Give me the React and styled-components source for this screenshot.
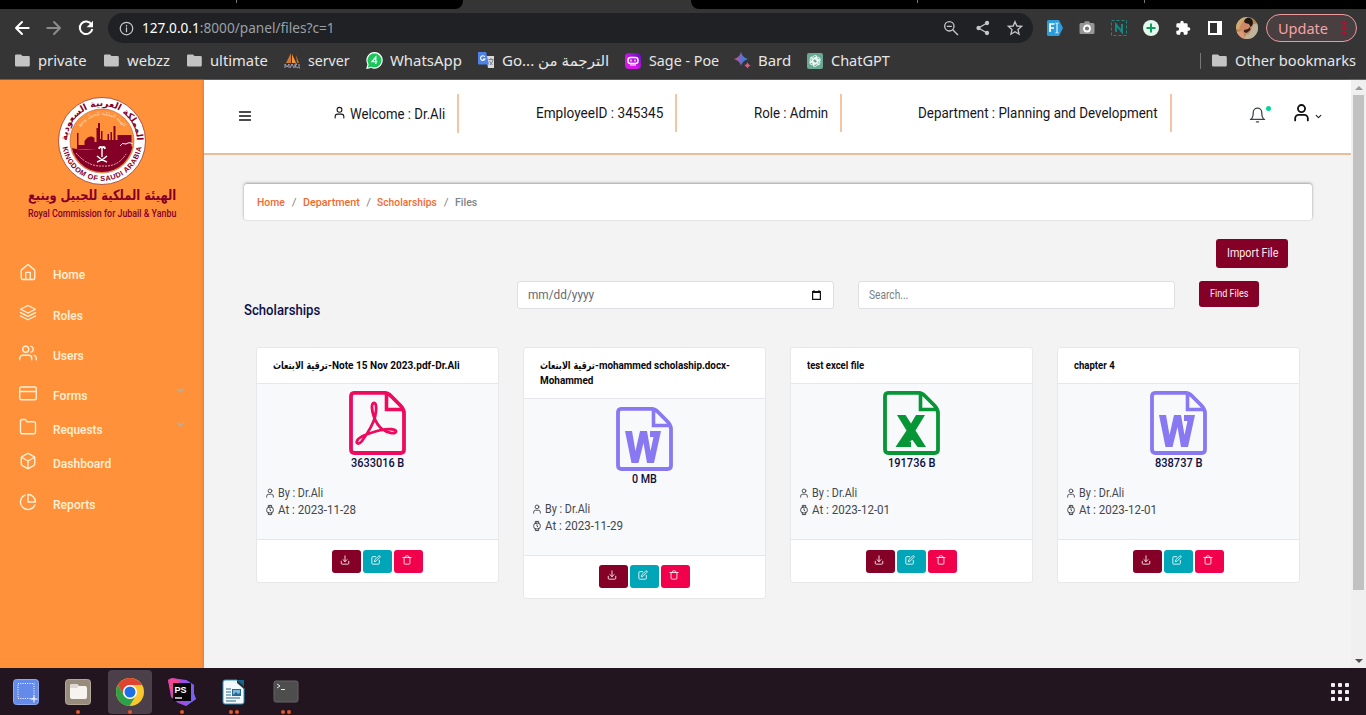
import React, { useLayoutEffect, useRef, useState } from "react";
import styled, { createGlobalStyle } from "styled-components";

const Global = createGlobalStyle`
  * { box-sizing: border-box; }
  html, body { margin: 0; padding: 0; overflow: hidden; }
  body { font-family: Roboto, "Noto Sans", "DejaVu Sans", sans-serif; }
`;

/* ---------- text that keeps a fixed measure ---------- */
const FitBox = styled.span`
  display: inline-block;
  width: ${(p) => p.$w}px;
  flex: none;
  white-space: nowrap;
  line-height: inherit;
`;
const FitInner = styled.span`
  display: inline-block;
  transform-origin: 0 50%;
  white-space: pre;
`;
function Fit({ w, children }) {
  const ref = useRef(null);
  const [scale, setScale] = useState(1);
  useLayoutEffect(() => {
    const natural = ref.current.offsetWidth;
    if (natural) setScale(w / natural);
  }, [w, children]);
  return (
    <FitBox $w={w}>
      <FitInner ref={ref} style={{ transform: `scaleX(${scale})` }}>{children}</FitInner>
    </FitBox>
  );
}

/* ---------- icons ---------- */
const Svg = styled.svg`
  display: block;
  flex: none;
  overflow: visible;
`;
const paths = {
  home: <><path d="M3 9.500 12 2l9 7.500V20a2 2 0 0 1-2 2H5a2 2 0 0 1-2-2Z" /><path d="M9 22V12.500h6V22" /></>,
  layers: <><path d="M12 2 2 7l10 5 10-5Z" /><path d="m2 11.500 10 5 10-5M2 16l10 5 10-5" /></>,
  users: <><path d="M17 21v-2a4 4 0 0 0-4-4H5a4 4 0 0 0-4 4v2" /><circle cx="9" cy="7" r="4" /><path d="M23 21v-2a4 4 0 0 0-3-3.87M16 3.13a4 4 0 0 1 0 7.75" /></>,
  card: <><rect x="1" y="4" width="22" height="17" rx="2" /><path d="M1 10h22" /></>,
  folder: <path d="M22 19a2 2 0 0 1-2 2H4a2 2 0 0 1-2-2V4a2 2 0 0 1 2-2h4.500l2 3H20a2 2 0 0 1 2 2Z" />,
  box: <><path d="M21 16V8a2 2 0 0 0-1-1.730l-7-4a2 2 0 0 0-2 0l-7 4A2 2 0 0 0 3 8v8a2 2 0 0 0 1 1.730l7 4a2 2 0 0 0 2 0l7-4A2 2 0 0 0 21 16Z" /><path d="M3.270 6.960 12 12.010l8.730-5.050M12 22.080V12" /></>,
  pie: <><path d="M21.210 15.890A10 10 0 1 1 8 2.830" /><path d="M22 12A10 10 0 0 0 12 2v10Z" /></>,
  user: <><path d="M20 22v-2.500a4.500 4.500 0 0 0-4.500-4.500h-7A4.500 4.500 0 0 0 4 19.500V22" /><circle cx="12" cy="7" r="4.500" /></>,
  watch: <><rect x="4" y="5" width="16" height="14" rx="6" /><path d="M12 9v3.500l2 1.500M8 5V1h8v4M8 19v4h8v-4" /></>,
  bell: <><path d="M18 9A6 6 0 0 0 6 9c0 8-4 10-4 10h20s-4-2-4-10" /><path d="M10.500 22.500h3" /></>,
  chevron: <path d="m4 8 8 8 8-8" />,
  download: <><path d="M21 15v5a2 2 0 0 1-2 2H5a2 2 0 0 1-2-2v-5M7 11l5 5 5-5M12 16V2" /></>,
  edit: <><path d="M11 4H4a2 2 0 0 0-2 2v14a2 2 0 0 0 2 2h14a2 2 0 0 0 2-2v-7" /><path d="M18.500 2.500a2.120 2.120 0 0 1 3 3L12 15l-4 1 1-4Z" /></>,
  trash: <path d="M2 6h20M19 6v14a2 2 0 0 1-2 2H7a2 2 0 0 1-2-2V6M8 6V4a2 2 0 0 1 2-2h4a2 2 0 0 1 2 2v2" />,
  menu: <path d="M1 4h22M1 12h22M1 20h22" />,
  back: <path d="M22 12H3M12 3l-9 9 9 9" />,
  forward: <path d="M2 12h19M12 3l9 9-9 9" />,
  info: <><circle cx="12" cy="12" r="10" /><path d="M12 11v6M12 7v1" /></>,
  zoomout: <><circle cx="9.500" cy="9.500" r="7" /><path d="m15 15 7 7M6.500 9.500h6" /></>,
};
const Icon = ({ name, size = 18, color = "currentColor", sw = 1.6 }) => (
  <Svg width={size} height={size} viewBox="0 0 24 24" fill="none" stroke={color} strokeWidth={sw} strokeLinecap="round" strokeLinejoin="round">
    {paths[name]}
  </Svg>
);

/* ---------- browser chrome ---------- */
const Screen = styled.div`
  width: 1366px;
  height: 715px;
  display: flex;
  flex-direction: column;
  overflow: hidden;
`;
const TabStrip = styled.div`
  height: 9px;
  flex: none;
  background: #353535;
  display: flex;
  justify-content: space-between;
`;
const TabGroup = styled.div`
  width: ${(p) => p.$w}px;
  background: #000;
  border-radius: ${(p) => (p.$right ? "0 0 0 8px" : "0 0 8px 0")};
  padding-left: ${(p) => p.$pad}px;
  display: flex;
  gap: 226px;
`;
const TabDivider = styled.i`
  width: 1px;
  height: 3px;
  background: #777;
`;
const Toolbar = styled.div`
  height: 38px;
  flex: none;
  background: #353535;
  display: flex;
  align-items: center;
  padding: 0 9px 0 14px;
  color: #fff;
`;
const NavIcons = styled.div`
  display: flex;
  gap: 16px;
  width: 94px;
`;
const Omnibox = styled.div`
  width: 925px;
  height: 30px;
  border-radius: 15px;
  background: #202124;
  display: flex;
  align-items: center;
  padding: 0 10px 0 11px;
  color: #c4c7ca;
  font: 14px/20px "Noto Sans", sans-serif;
`;
const Address = styled.div`
  margin-left: 8px;
  flex: 1;
  color: #9aa0a6;
  b { color: #fff; font-weight: 400; }
`;
const OmniActions = styled.div`
  display: flex;
  gap: 16px;
`;
const Extensions = styled.div`
  display: flex;
  align-items: center;
  gap: 16px;
  margin-left: 14px;
`;
const Update = styled.div`
  width: 91px;
  height: 28px;
  margin-left: 8px;
  border: 1px solid #ef9a9f;
  border-radius: 14px;
  background: #493f40;
  color: #f4a3a7;
  display: flex;
  align-items: center;
  justify-content: space-between;
  padding: 0 10px 1px 11px;
  font: 14.500px/20px "Noto Sans", sans-serif;
`;
const Bookmarks = styled.div`
  height: 33px;
  flex: none;
  background: #353535;
  border-bottom: 1px solid #656565;
  display: flex;
  align-items: center;
  padding: 0 10px 5px 15px;
  color: #e6e6e6;
  font: 14.500px/20px "Noto Sans", "DejaVu Sans", sans-serif;
`;
const Bookmark = styled.div`
  display: flex;
  align-items: center;
  gap: ${(p) => p.$gap ?? 8}px;
  margin-right: ${(p) => p.$mr ?? 15}px;
`;
const BookmarkLabel = styled.div`padding-bottom: 2px;`;
const Spacer = styled.div`flex: 1;`;
const BookmarkRule = styled.i`
  width: 1px;
  height: 16px;
  background: #777;
  margin-right: 11px;
`;

const Reload = () => (
  <Svg width="16" height="16" viewBox="0 0 16 16" fill="none" stroke="#fff" strokeWidth="2">
    <path d="M13.500 4.500A6.300 6.300 0 1 0 14.300 9" /><path d="M15 .8v6.400H8.700Z" fill="#fff" stroke="none" />
  </Svg>
);
const Folder = () => (
  <Svg width="15" height="13" viewBox="0 0 15 13"><path d="M1.500.5H6L7.500 2H13.500A1.300 1.300 0 0 1 14.800 3.300V11.200A1.300 1.300 0 0 1 13.500 12.500H1.300A1.300 1.300 0 0 1 0 11.200V1.800A1.300 1.300 0 0 1 1.500.5Z" fill="#c3c3c3" /></Svg>
);
const Share = () => (
  <Svg width="16" height="16" viewBox="0 0 16 16" fill="#c4c7ca" stroke="#c4c7ca" strokeWidth="1.300"><path d="M12 3 3.500 8l8.500 5" fill="none" /><circle cx="12" cy="3" r="1.500" /><circle cx="3.500" cy="8" r="1.500" /><circle cx="12" cy="13" r="1.500" /></Svg>
);
const Star = () => (
  <Svg width="16" height="16" viewBox="0 0 24 24" fill="none" stroke="#c4c7ca" strokeWidth="2"><path d="m12 2.500 2.800 6.500 7.100.6-5.400 4.700 1.600 7L12 17.600l-6.100 3.700 1.600-7-5.400-4.700 7.100-.6Z" /></Svg>
);
const FontExt = () => (
  <Svg width="16" height="16" viewBox="0 0 16 16"><path d="M1.500 0H12l4 8-4 8H1.500A1.500 1.500 0 0 1 0 14.500v-13A1.500 1.500 0 0 1 1.500 0Z" fill="#2d9cdb" /><path d="M3 12V4h4.500M3 8h4" stroke="#fff" strokeWidth="1.700" fill="none" /><path d="M8.500 3c1 0 1.500.3 1.500 1v8c0 .7-.5 1-1.500 1M11.500 3c-1 0-1.500.3-1.500 1M11.500 13c-1 0-1.500-.3-1.500-1" stroke="#fff" fill="none" /></Svg>
);
const Camera = () => (
  <Svg width="16" height="14" viewBox="0 0 16 14"><path d="M2 2h3l1-1.700h4L11 2h3a1.500 1.500 0 0 1 1.500 1.500v8A1.500 1.500 0 0 1 14 13H2A1.500 1.500 0 0 1 .5 11.500v-8A1.500 1.500 0 0 1 2 2Z" fill="#969696" /><circle cx="8" cy="7.500" r="3" fill="#777" stroke="#fff" strokeWidth="1.800" /></Svg>
);
const NExt = () => (
  <Svg width="16" height="16" viewBox="0 0 16 16" fill="none" stroke="#168b85"><rect x=".5" y=".5" width="15" height="15" strokeDasharray="3 2" /><path d="M5 12V4.500L11 12V4" strokeWidth="1.900" /></Svg>
);
const PlusExt = () => (
  <Svg width="16" height="16" viewBox="0 0 16 16"><circle cx="8" cy="8" r="8" fill="#e5f8ed" /><path d="M8 3.500v9M3.500 8h9" stroke="#0c9f5f" strokeWidth="2" /></Svg>
);
const Puzzle = () => (
  <Svg width="16" height="16" viewBox="0 0 24 24"><path d="M20.500 11H19V7a2 2 0 0 0-2-2h-4V3.500a2.500 2.500 0 0 0-5 0V5H4a2 2 0 0 0-2 2v3.800h1.500a2.700 2.700 0 0 1 0 5.400H2V20a2 2 0 0 0 2 2h3.800v-1.500a2.700 2.700 0 0 1 5.400 0V22H17a2 2 0 0 0 2-2v-4h1.500a2.500 2.500 0 0 0 0-5Z" fill="#fff" /></Svg>
);
const Panel = () => (
  <Svg width="14" height="14" viewBox="0 0 14 14"><path d="M0 0h14v14H0Z" fill="#fff" /><path d="M2 2h7v10H2Z" fill="#303030" /></Svg>
);
const PanelWrap = styled.span`margin-left: 1px;`;
const Avatar = () => (
  <Svg width="22" height="22" viewBox="0 0 22 22"><defs><clipPath id="avatar"><circle cx="11" cy="11" r="11" /></clipPath></defs><g clipPath="url(#avatar)"><path d="M0 0h22v22H0Z" fill="#b18850" /><path d="M0 0h11L6 13 0 12Z" fill="#cfab6d" /><path d="m15 8 7-2v16H8Z" fill="#beb49b" /><path d="M5 7q3-6 9-4l3 6-4 8-7 1-3-6Z" fill="#cf8867" /><path d="M8 4q2-4 6-3 4 2 2.500 7l-2 2-1.500-3-4-1Z" fill="#1d1715" /><path d="m8 13 4-1 2-2 .5 3-4 3-2.500-1Z" fill="#3c211b" /><path d="m0 15 6-1 4 8H0Z" fill="#dc9c79" /></g></Svg>
);
const Dots3 = () => (
  <Svg width="4" height="14" viewBox="0 0 4 14" fill="#d6002f"><circle cx="2" cy="2" r="1.700" /><circle cx="2" cy="7" r="1.700" /><circle cx="2" cy="12" r="1.700" /></Svg>
);
const Server = () => (
  <Svg width="17" height="16" viewBox="0 0 17 16"><path d="M7 0v10H2Z" fill="#d0782e" /><path d="m8 1 4 9H8Z" fill="#f39a3d" /><path d="m12 2 3 8h-2Z" fill="#d96b21" /><path d="M1 15v-4l2 3 2-3v4M6 15l2-4 2 4M11 15v-4h2l-2 2 3 2M15 11v4h1" stroke="#a9a0b8" fill="none" /></Svg>
);
const WhatsApp = () => (
  <Svg width="17" height="17" viewBox="0 0 17 17"><path d="M8.500.7a7.700 7.700 0 1 1-3.500 14.600l-4 1 1-4A7.700 7.700 0 0 1 8.500.7Z" fill="#19c75a" stroke="#fff" strokeWidth="1.200" /><path d="M9.800 12V5L6 9.700h5.300" fill="none" stroke="#fff" strokeWidth="1.300" /></Svg>
);
const Translate = () => (
  <Svg width="17" height="17" viewBox="0 0 17 17"><path d="M8 4h8v12H10Z" fill="#dadada" /><path d="M0 0h8l3 12.500H1Q0 12.500 0 11.500Z" fill="#4d83e8" /><path d="M6.800 4.800A2.300 2.300 0 1 0 7 7H5" stroke="#fff" fill="none" strokeWidth="1.100" /><path d="M10.500 7.500h5M13 6v1.500M15 8q-1 3-3 5M11.500 9q1 2 3 4" stroke="#667" fill="none" strokeWidth=".8" /></Svg>
);
const Poe = () => (
  <Svg width="16" height="16" viewBox="0 0 16 16"><defs><linearGradient id="poe" x1="0" y1="1" x2="1" y2="0"><stop offset=".4" stopColor="#d715e8" /><stop offset="1" stopColor="#5212b8" /></linearGradient></defs><rect width="16" height="16" rx="4" fill="url(#poe)" /><rect x="3" y="4.500" width="10" height="6" rx="2.500" fill="none" stroke="#fff" strokeWidth="1.400" /><path d="M6 6.500v2M10 6.500v2M5 12h6" stroke="#fff" strokeWidth="1.200" /></Svg>
);
const Bard = () => (
  <Svg width="17" height="17" viewBox="0 0 17 17"><defs><linearGradient id="bard"><stop stopColor="#e55575" /><stop offset=".45" stopColor="#7668c7" /><stop offset="1" stopColor="#188fee" /></linearGradient></defs><path d="M7 0q1.500 5.500 7 7-5.500 1.500-7 7-1.500-5.500-7-7 5.500-1.500 7-7Z" fill="url(#bard)" /><path d="M13.500 10.500q.8 2.200 3 3-2.200.8-3 3-.8-2.200-3-3 2.200-.8 3-3Z" fill="#d65f87" /></Svg>
);
const ChatGPT = () => (
  <Svg width="16" height="16" viewBox="0 0 16 16"><rect width="16" height="16" rx="2" fill="#68a894" /><g fill="none" stroke="#f3fffa" strokeWidth=".9">{[0, 60, 120, 180, 240, 300].map((a) => <path key={a} transform={`rotate(${a} 8 8)`} d="M5.700 9.300V5a2.500 2.500 0 0 1 4.300-1.700L6.800 5.200v2" />)}</g></Svg>
);

const bookmarks = [
  [<Folder />, "private", 49, 8, 17],
  [<Folder />, "webzz", 43, 8, 17],
  [<Folder />, "ultimate", 58, 8, 16],
  [<Server />, "server", 42, 7, 16],
  [<WhatsApp />, "WhatsApp", 72, 7, 16],
  [<Translate />, "Go... الترجمة من", 107, 7, 16],
  [<Poe />, "Sage - Poe", 70, 8, 15],
  [<Bard />, "Bard", 33, 7, 16],
  [<ChatGPT />, "ChatGPT", 59, 8, 0],
];

function Browser() {
  return (
    <>
      <TabStrip>
        <TabGroup $w={463} $pad={236}><TabDivider /></TabGroup>
        <TabGroup $right $w={675} $pad={226}><TabDivider /><TabDivider /></TabGroup>
      </TabStrip>
      <Toolbar>
        <NavIcons><Icon name="back" size={16} sw={3} /><Icon name="forward" size={16} sw={3} color="#8c8c8c" /><Reload /></NavIcons>
        <Omnibox>
          <Icon name="info" size={15} sw={2} />
          <Address><Fit w={193}><b>127.0.0.1</b>:8000/panel/files?c=1</Fit></Address>
          <OmniActions><Icon name="zoomout" size={16} sw={2} /><Share /><Star /></OmniActions>
        </Omnibox>
        <Extensions><FontExt /><Camera /><NExt /><PlusExt /><Puzzle /><PanelWrap><Panel /></PanelWrap></Extensions>
        <Spacer />
        <Avatar />
        <Update><Fit w={50}>Update</Fit><Dots3 /></Update>
      </Toolbar>
      <Bookmarks>
        {bookmarks.map(([icon, label, w, gap, mr]) => (
          <Bookmark key={label} $gap={gap} $mr={mr}>{icon}<BookmarkLabel><Fit w={w}>{label}</Fit></BookmarkLabel></Bookmark>
        ))}
        <Spacer />
        <BookmarkRule />
        <Bookmark $gap={8} $mr={0}><Folder /><BookmarkLabel><Fit w={121}>Other bookmarks</Fit></BookmarkLabel></Bookmark>
      </Bookmarks>
    </>
  );
}

/* ---------- sidebar ---------- */
const Page = styled.div`
  height: 588px;
  flex: none;
  display: flex;
  background: #f3f3f3;
`;
const Sidebar = styled.aside`
  width: 204px;
  flex: none;
  background: #ff913b;
  color: #fff1d8;
`;
const Brand = styled.div`
  height: 173px;
  padding-top: 17px;
  display: flex;
  flex-direction: column;
  align-items: center;
  color: #850027;
`;
const BrandArabic = styled.div`
  font: 700 14px/20px "DejaVu Sans", sans-serif;
`;
const BrandEnglish = styled.div`
  font: 500 11px/16px Roboto, sans-serif;
  margin-top: 1px;
`;
const NavItem = styled.div`
  height: ${(p) => p.$h}px;
  padding: 0 20px 0 19px;
  display: flex;
  align-items: flex-start;
  font: 500 13.500px/20px Roboto, sans-serif;
`;
const NavLabel = styled.div`
  margin: 0 0 0 16px;
  padding-top: 0.5px;
  flex: 1;
`;
const NavChevron = styled.span`
  color: #bcae96;
  margin-top: 3px;
`;

const Seal = () => (
  <Svg width="88" height="88" viewBox="0 0 88 88">
    <defs>
      <path id="sealTop" d="M9.500 50a35 35 0 1 1 69 0" />
      <path id="sealBottom" d="M4 44a40 40 0 0 0 80 0" />
      <path id="sealInner" d="M18 44a26 26 0 0 1 52 0" />
      <clipPath id="sealDisc"><circle cx="44" cy="44" r="31" /></clipPath>
    </defs>
    <circle cx="44" cy="44" r="43.500" fill="#fff" stroke="#9b3a31" strokeWidth=".8" />
    <circle cx="44" cy="44" r="32" fill="#ff913b" stroke="#b55d35" strokeWidth=".6" />
    <g clipPath="url(#sealDisc)" fill="#850027">
      <path d="M13 52h6V36h1.500v12h6v-4q5-7 10-3v4h2V31h1.500v-5h2v16h1V34h1.500v9h5v-6h1.500v6h1.500v-8h1.500v8h1.500V29h2v14h2v-5h14v15H44Z" />
      <path d="M13 51q18 4 30 0 12-5 33-1v26H12Z" />
      <path d="M62 49q2-4 6-2 4-3 8 1" fill="none" stroke="#fff" />
    </g>
    <path d="M18 56q12 14 27 13 15 1 23-12" fill="none" stroke="#e9b9b0" strokeWidth="1" strokeDasharray="2 1" />
    <path d="M44 60v-9m-3 1q1-3 3-1 2-2 3 1M40.500 51.500q2-3 3.500-1 2-2 3.500 1M39 65q6-2 10-6M49 65q-6-2-10-6" fill="none" stroke="#fff" strokeWidth="1.400" />
    <text fill="#850027" fontFamily="DejaVu Sans, sans-serif" fontSize="9" fontWeight="700"><textPath href="#sealTop" startOffset="50%" textAnchor="middle">المملكة العربية السعودية</textPath></text>
    <text fill="#ffdfb9" fontFamily="DejaVu Sans, sans-serif" fontSize="4.800"><textPath href="#sealInner" startOffset="50%" textAnchor="middle">الهيئة الملكية للجبيل وينبع</textPath></text>
    <text fill="#850027" fontFamily="Liberation Sans, sans-serif" fontSize="7.300" fontWeight="700"><textPath href="#sealBottom" startOffset="50%" textAnchor="middle" textLength="113">KINGDOM OF SAUDI ARABIA</textPath></text>
  </Svg>
);

const nav = [
  ["home", "Home", 32, 41],
  ["layers", "Roles", 30, 40],
  ["users", "Users", 31, 40],
  ["card", "Forms", 34, 34, true],
  ["folder", "Requests", 50, 34, true],
  ["box", "Dashboard", 58, 41],
  ["pie", "Reports", 43, 40],
];
const NavList = styled.nav`padding-top: 10px;`;

/* ---------- main column ---------- */
const Main = styled.main`
  width: 1147px;
  flex: none;
  box-shadow: -1px 0 3px #0002;
`;
const Header = styled.header`
  height: 75px;
  background: #fff;
  border-bottom: 2px solid #e9bd9b;
  display: flex;
  align-items: flex-start;
  padding: 14px 29px 0 35px;
  font: 14px/20px Roboto, sans-serif;
  color: #16161c;
`;
const MenuButton = styled.div`padding-top: 16px; width: 94px;`;
const HeaderInfo = styled.div`
  height: ${(p) => p.$h ?? 38}px;
  width: ${(p) => p.$w}px;
  border-right: 2px solid #f4c5a3;
  padding: ${(p) => p.$pt ?? 9}px 12px 0 0;
  display: flex;
  justify-content: flex-end;
  gap: 4px;
`;
const HeaderUser = styled.span`margin-top: 2px;`;
const HeaderActions = styled.div`
  display: flex;
  margin-left: auto;
  padding-top: 9px;
`;
const BellWrap = styled.div`
  position: relative;
  margin: 3px 26px 0 0;
  color: #3d434c;
`;
const BellDot = styled.i`
  position: absolute;
  top: 0;
  right: -5px;
  width: 5px;
  height: 5px;
  border-radius: 50%;
  background: #05d59b;
`;
const AccountChevron = styled.span`margin: 10px 0 0 4px;`;
const Crumbs = styled.div`
  margin: 29px 39px 0 40px;
  height: 36px;
  background: #fff;
  border-radius: 3px;
  box-shadow: 0 -1px 3px #0005, 0 0 2px #0001;
  padding: 0 13px 1px;
  display: flex;
  align-items: center;
  font: 500 11.500px/18px Roboto, sans-serif;
  color: #f16a32;
`;
const Slash = styled.span`
  width: ${(p) => p.$w ?? 17}px;
  text-align: center;
  color: #7e858b;
  font-weight: 400;
`;
const Current = styled.span`color: #7e858b;`;
const Button = styled.div`
  width: ${(p) => p.$w}px;
  height: ${(p) => p.$h}px;
  border-radius: 3px;
  background: #850027;
  color: #ffeaf0;
  display: flex;
  align-items: center;
  justify-content: center;
  padding-bottom: 1px;
  font: ${(p) => p.$fs}px/16px Roboto, sans-serif;
`;
const ImportRow = styled.div`
  display: flex;
  justify-content: flex-end;
  padding: 19px 63px 0 0;
`;
const Filters = styled.div`
  display: flex;
  padding: 13px 0 0 40px;
  height: 80px;
`;
const Title = styled.h1`
  margin: 19px 0 0;
  width: 273px;
  font: 500 14px/20px Roboto, sans-serif;
  color: #0c0f4a;
`;
const Field = styled.div`
  width: 317px;
  height: 28px;
  margin-right: 24px;
  background: #fff;
  border: 1px solid #dedfe2;
  border-radius: 3px;
  padding: 0 12px 1px 10px;
  display: flex;
  align-items: center;
  justify-content: space-between;
  color: ${(p) => p.$color};
  font: 12px/18px Roboto, sans-serif;
`;
const Calendar = () => (
  <Svg width="9" height="10" viewBox="0 0 9 10"><path d="M.6 2h7.800v7.300H.6Z" fill="none" stroke="#111" strokeWidth="1.200" /><path d="M0 1h9v2H0ZM1.500 0h1v2h-1ZM6.500 0h1v2h-1Z" fill="#111" /></Svg>
);

/* ---------- file cards ---------- */
const Cards = styled.section`
  display: flex;
  align-items: flex-start;
  gap: 24px;
  padding: 0 0 0 52px;
  margin-top: -1px;
`;
const Card = styled.article`
  width: 243px;
  flex: none;
  background: #fff;
  border: 1px solid #e7e8eb;
  border-radius: 3px;
`;
const CardTitle = styled.div`
  padding: 10px 16px;
  min-height: 35px;
  border-bottom: 1px solid #e5e7ea;
  font: 700 10.500px/15px Roboto, "DejaVu Sans", sans-serif;
  color: #08080c;
`;
const TitleLine = styled.div`
  display: flex;
  height: 15px;
`;
const ArabicRun = styled.span`
  font: 700 10.500px/15px "DejaVu Sans", sans-serif;
`;
const CardBody = styled.div`
  height: ${(p) => (p.$tall ? 156 : 155)}px;
  background: #f8f9fb;
  padding-top: ${(p) => (p.$tall ? 8 : 7)}px;
  color: #43474d;
`;
const FileMark = styled.div`
  display: flex;
  justify-content: center;
`;
const SizeLine = styled.div`
  text-align: center;
  font: 500 12px/17px Roboto, sans-serif;
  color: #0c0f3d;
  height: 30px;
`;
const MetaLine = styled.div`
  height: 17px;
  padding-left: 8px;
  display: flex;
  align-items: center;
  gap: 3px;
  font: 12px/17px Roboto, sans-serif;
`;
const MetaIcon = styled.span`padding-bottom: 2px;`;
const CardFooter = styled.div`
  height: 43px;
  border-top: 1px solid #e5e7ea;
  display: flex;
  justify-content: center;
  gap: 2px;
  padding: ${(p) => (p.$tall ? 9 : 10)}px 0 0 0;
`;
const Action = styled.div`
  width: 29px;
  height: 23px;
  border-radius: 3px;
  background: ${(p) => p.$bg};
  color: #fff;
  padding: 5px 0 0 8px;
`;

const Glyphs = {
  pdf: (
    <path d="M26 26C24 34 18 43 13 50C10 54 6 53 8.500 49C11 45 20 42 32 39C40 37.500 47 38 47 40.500C46 43.500 38 42 33 38C28 34 26.500 30 25 26C22.500 19 22 12 25 12C28 12 27.500 20 26 26Z" fill="none" stroke="#ee0a5e" strokeWidth="2.800" strokeLinejoin="round" />
  ),
  word: <path d="M9 24H16L19.500 44 24 24H31L34.500 44 37.500 30H34V24H45L38 56H31L27.500 36 22.500 56H15.500Z" fill="#8878f2" />,
  excel: <path d="M14 24h8.500L28 32.500 33 24H42L32.500 39.500 43 56h-8.500L29.500 49 26 50.500H28V56H12.500L23.500 39.500Z" fill="#069636" />,
};
const glyphColor = { pdf: "#ee0a5e", word: "#8878f2", excel: "#069636" };
const FileIcon = ({ kind }) => (
  <Svg width="57" height="64" viewBox="0 0 57 64">
    <path d="M5 1.900H36Q39 1.900 42 5L51 14Q55 18 55 22V58.500Q55 62 51.500 62H5.500Q2 62 2 58.500V5.500Q2 1.900 5 1.900Z" fill="none" stroke={glyphColor[kind]} strokeWidth="3.800" />
    <path d="M37.500 2v16.500H55" fill="none" stroke={glyphColor[kind]} strokeWidth="3.600" />
    {Glyphs[kind]}
  </Svg>
);

const files = [
  { kind: "pdf", lines: [["ترقية الابتعاث", 55, "-Note 15 Nov 2023.pdf-Dr.Ali", 132]], size: "3633016 B", sw: 53, date: "2023-11-28", dw: 78 },
  { kind: "word", lines: [["ترقية الابتعاث", 55, "-mohammed scholaship.docx-", 135], [null, 0, "Mohammed", 53]], size: "0 MB", sw: 25, date: "2023-11-29", dw: 78, tall: true },
  { kind: "excel", lines: [[null, 0, "test excel file", 57]], size: "191736 B", sw: 47, date: "2023-12-01", dw: 78 },
  { kind: "word", lines: [[null, 0, "chapter 4", 41]], size: "838737 B", sw: 47, date: "2023-12-01", dw: 78 },
];

function FileCard({ file }) {
  return (
    <Card>
      <CardTitle>
        {file.lines.map(([ar, aw, en, ew]) => (
          <TitleLine key={en}>{ar && <ArabicRun><Fit w={aw}>{ar}</Fit></ArabicRun>}<Fit w={ew}>{en}</Fit></TitleLine>
        ))}
      </CardTitle>
      <CardBody $tall={file.tall}>
        <FileMark><FileIcon kind={file.kind} /></FileMark>
        <SizeLine><Fit w={file.sw}>{file.size}</Fit></SizeLine>
        <MetaLine><MetaIcon><Icon name="user" size={10} sw={2.2} /></MetaIcon><Fit w={45}>By : Dr.Ali</Fit></MetaLine>
        <MetaLine><MetaIcon><Icon name="watch" size={10} sw={2.4} /></MetaIcon><Fit w={file.dw}>{`At : ${file.date}`}</Fit></MetaLine>
      </CardBody>
      <CardFooter $tall={file.tall}>
        <Action $bg="#850027"><Icon name="download" size={10} sw={2} /></Action>
        <Action $bg="#00a6b8"><Icon name="edit" size={10} sw={2} /></Action>
        <Action $bg="#f1004b"><Icon name="trash" size={10} sw={2} /></Action>
      </CardFooter>
    </Card>
  );
}

/* ---------- scrollbar and dock ---------- */
const Scrollbar = styled.div`
  width: 15px;
  background: #f0f0f0;
  display: flex;
  flex-direction: column;
  align-items: center;
  padding: 6px 0 5px;
`;
const Thumb = styled.div`
  width: 11px;
  height: 495px;
  margin: 5px 0 auto;
  background: #c1c1c1;
`;
const Arrow = ({ down }) => (
  <Svg width="8" height="4" viewBox="0 0 8 4"><path d={down ? "M0 0h8L4 4Z" : "M0 4h8L4 0Z"} fill={down ? "#505050" : "#9a9a9a"} /></Svg>
);
const Dock = styled.footer`
  height: 47px;
  flex: none;
  background: #22151f;
  display: flex;
  padding: 2px 17px 1px 4px;
  gap: 8px;
`;
const DockItem = styled.div`
  width: 44px;
  height: 44px;
  border-radius: 4px;
  background: ${(p) => (p.$active ? "#4b3f49" : "transparent")};
  display: flex;
  flex-direction: column;
  align-items: center;
  padding-top: 8px;
`;
const Running = styled.div`
  display: flex;
  gap: 2px;
  margin-top: 4px;
`;
const RunDot = styled.i`
  width: 4px;
  height: 4px;
  border-radius: 50%;
  background: #e2572b;
`;
const AppGrid = styled.div`
  margin: 13px 0 0 auto;
  display: grid;
  grid-template-columns: repeat(3, 4px);
  grid-auto-rows: 4px;
  gap: 3px;
`;
const GridDot = styled.i`
  background: #f2eef1;
  border-radius: 1px;
`;

const dockIcons = {
  shot: <><rect x="1.500" y="1.500" width="25" height="25" rx="3" fill="#658bea" stroke="#8fa9ee" /><rect x="6" y="5.500" width="16" height="15" fill="none" stroke="#fff" strokeWidth="1" strokeDasharray="1 1.300" /><path d="M22 17.500v7M18.500 21h7" stroke="#fff" /></>,
  files: <><rect x="1.500" y="1.500" width="25" height="25" rx="3" fill="#988d7c" stroke="#b2a897" /><path d="M6 8q0-2 2-2h5l2 2h6q2 0 2 2v9q0 2-2 2H8q-2 0-2-2Z" fill="#f7f4ef" /><path d="M6 8q0-2 2-2h5l2 2-2 2H6Z" fill="#ded8ce" /></>,
  chrome: <><circle cx="14" cy="14" r="14" fill="#f9c82f" /><path d="M1.900 7A14 14 0 0 1 26.100 7H14a7 7 0 0 0-6 10.500Z" fill="#df4332" /><path d="M1.900 7A14 14 0 0 0 13.500 28l6.500-10.500A7 7 0 0 1 8 17.500Z" fill="#2ba14c" /><circle cx="14" cy="14" r="7" fill="#fff" /><circle cx="14" cy="14" r="5.500" fill="#1d70e4" /></>,
  ps: <><path d="m0 2 4-2 14 2 8 5v9l2 5-10 7-8-3-7-6Z" fill="#a34be6" /><path d="m0 2 4-2 8 2L4 20Z" fill="#f0478f" /><path d="m18 2 8 5v9l2 5-10 7Z" fill="#7860f5" /><rect x="5" y="5" width="18" height="18" fill="#080409" /><path d="M7 20h7" stroke="#fff" strokeWidth="1.400" /><text x="6.500" y="14.500" fill="#fff" fontFamily="Liberation Sans, sans-serif" fontSize="9" fontWeight="700">PS</text></>,
  writer: <><path d="M14 2h10v10Z" fill="#15658e" /><path d="M5 2h12l7 8v14q0 2-2 2H5q-2 0-2-2V4q0-2 2-2Z" fill="#f2faff" stroke="#2a92bd" /><path d="M17 2v3l7 6V8Z" fill="#24323e" /><path d="M6 11h5M6 14h5M6 17h5M6 20h14M6 23h10" stroke="#28678e" /><rect x="12.500" y="11.500" width="8" height="6" fill="#7cb9df" stroke="#28678e" /><path d="m13 17 3-3 2 2 2-1v2Z" fill="#28678e" /></>,
  term: <><rect x="2" y="3" width="24" height="21" rx="2" fill="#4d4d4d" stroke="#656565" /><path d="m5 6 3 2-3 2M9 11.500h4" stroke="#e5e5e5" fill="none" /></>,
};
const dock = [["shot", 0], ["files", 1], ["chrome", 1, true], ["ps", 1], ["writer", 2], ["term", 2]];

export default function App() {
  return (
    <Screen>
      <Global />
      <Browser />
      <Page>
        <Sidebar>
          <Brand>
            <Seal />
            <BrandArabic><Fit w={148}>الهيئة الملكية للجبيل وينبع</Fit></BrandArabic>
            <BrandEnglish><Fit w={148}>Royal Commission for Jubail &amp; Yanbu</Fit></BrandEnglish>
          </Brand>
          <NavList>
            {nav.map(([icon, label, w, h, more]) => (
              <NavItem key={label} $h={h}>
                <Icon name={icon} size={18} sw={1.8} />
                <NavLabel><Fit w={w}>{label}</Fit></NavLabel>
                {more && <NavChevron><Icon name="chevron" size={7} sw={6} /></NavChevron>}
              </NavItem>
            ))}
          </NavList>
        </Sidebar>
        <Main>
          <Header>
            <MenuButton><Icon name="menu" size={12} sw={2.6} color="#111" /></MenuButton>
            <HeaderInfo $w={126} $h={39} $pt={10}><HeaderUser><Icon name="user" size={13} sw={2} /></HeaderUser><Fit w={95}>Welcome : Dr.Ali</Fit></HeaderInfo>
            <HeaderInfo $w={218}><Fit w={127}>EmployeeID : 345345</Fit></HeaderInfo>
            <HeaderInfo $w={165}><Fit w={74}>Role : Admin</Fit></HeaderInfo>
            <HeaderInfo $w={330}><Fit w={240}>Department : Planning and Development</Fit></HeaderInfo>
            <HeaderActions>
              <BellWrap><Icon name="bell" size={17} sw={1.8} /><BellDot /></BellWrap>
              <Icon name="user" size={19} sw={2.3} color="#111" />
              <AccountChevron><Icon name="chevron" size={7} sw={3.5} /></AccountChevron>
            </HeaderActions>
          </Header>
          <Crumbs>
            <Fit w={28}>Home</Fit><Slash $w={18}>/</Slash>
            <Fit w={57}>Department</Fit><Slash>/</Slash>
            <Fit w={60}>Scholarships</Fit><Slash $w={18}>/</Slash>
            <Current><Fit w={22}>Files</Fit></Current>
          </Crumbs>
          <ImportRow><Button $w={72} $h={29} $fs={12}><Fit w={51}>Import File</Fit></Button></ImportRow>
          <Filters>
            <Title><Fit w={76}>Scholarships</Fit></Title>
            <Field $color="#666a70"><Fit w={66}>mm/dd/yyyy</Fit><Calendar /></Field>
            <Field $color="#7a8086"><Fit w={39}>Search...</Fit></Field>
            <Button $w={60} $h={26} $fs={10}><Fit w={38}>Find Files</Fit></Button>
          </Filters>
          <Cards>{files.map((file, i) => <FileCard key={i} file={file} />)}</Cards>
        </Main>
        <Scrollbar><Arrow /><Thumb /><Arrow down /></Scrollbar>
      </Page>
      <Dock>
        {dock.map(([name, dots, active]) => (
          <DockItem key={name} $active={active}>
            <Svg width="28" height="28" viewBox="0 0 28 28">{dockIcons[name]}</Svg>
            <Running>{Array.from({ length: dots }, (_, i) => <RunDot key={i} />)}</Running>
          </DockItem>
        ))}
        <AppGrid>{Array.from({ length: 9 }, (_, i) => <GridDot key={i} />)}</AppGrid>
      </Dock>
    </Screen>
  );
}
